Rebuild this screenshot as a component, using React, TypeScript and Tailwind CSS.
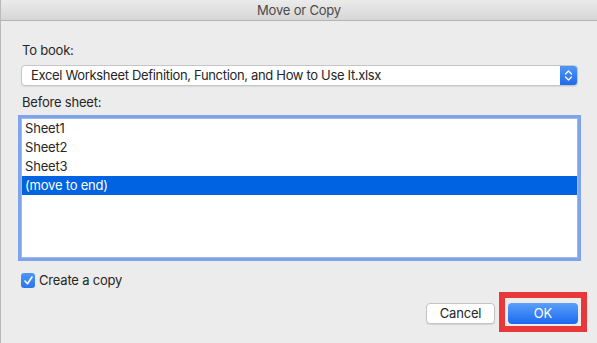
import React from "react";

export default function App() {
  const rows = ["Sheet1", "Sheet2", "Sheet3"];
  return (
    <div className="w-[597px] h-[343px] overflow-hidden bg-[#ececec] font-['Inter',sans-serif] text-[13px] tracking-[-0.2px] text-[#262626] relative border-l border-[#b9b9b9]">
      {/* Title bar */}
      <div className="h-[21px] border-b border-[#b3b3b3] bg-gradient-to-b from-[#ebebeb] to-[#d6d6d6] flex items-center justify-center text-[#4a4a4a] text-[13px] leading-none">
        Move or Copy
      </div>
      <div className="pl-[20px] pr-[19px] flex flex-col">
        <div className="mt-[21px] h-[16px] leading-[16px] pl-[1px]">To book:</div>
        <div className="mt-[7px] h-[21px] flex rounded-[4px] bg-white border border-[#c6c6c6] shadow-[0_1px_1px_rgba(0,0,0,0.08)] overflow-hidden">
          <div className="flex-1 pl-[9px] flex items-center leading-none whitespace-nowrap tracking-[-0.33px]">
            Excel Worksheet Definition, Function, and How to Use It.xlsx
          </div>
          <div className="w-[17px] bg-gradient-to-b from-[#5096f8] to-[#1f68ee] flex items-center justify-center">
            <svg width="9" height="13" viewBox="0 0 9 13" fill="none" stroke="white" strokeWidth="1.3" strokeLinecap="round" strokeLinejoin="round">
              <path d="M1.5 5 L4.5 2 L7.5 5" />
              <path d="M1.5 8 L4.5 11 L7.5 8" />
            </svg>
          </div>
        </div>
        <div className="mt-[8px] h-[16px] leading-[16px] pl-[1px]">Before sheet:</div>
        <div className="mt-[8px] h-[140px] bg-white border border-[#9db9ec] ring-[3px] ring-[#7fa4ea] flex flex-col">
          {rows.map((r) => (
            <div key={r} className="h-[19px] pl-[3px] flex items-center leading-none">
              {r}
            </div>
          ))}
          <div className="h-[19px] pl-[3px] flex items-center leading-none bg-[#0063e1] text-white">
            (move to end)
          </div>
        </div>
        <div className="mt-[14px] flex items-center gap-[4px] h-[16px]">
          <div className="w-[14px] h-[15px] rounded-[3px] bg-gradient-to-b from-[#4f95f7] to-[#2a75f0] flex items-center justify-center">
            <svg width="11" height="11" viewBox="0 0 11 11" fill="none" stroke="white" strokeWidth="1.6" strokeLinecap="round" strokeLinejoin="round">
              <path d="M2 6 L4.5 8.7 L9 2" />
            </svg>
          </div>
          <span className="leading-none">Create a copy</span>
        </div>
        <div className="mt-[15px] flex justify-end gap-[13px]">
          <div className="w-[69px] h-[21px] rounded-[4px] bg-white border border-[#c4c4c4] shadow-[0_1px_1px_rgba(0,0,0,0.1)] flex items-center justify-center leading-none text-[#262626]">
            Cancel
          </div>
          <div className="relative">
            <div className="w-[70px] h-[21px] rounded-[4px] bg-gradient-to-b from-[#5a9ffa] to-[#1b68ef] text-white flex items-center justify-center leading-none">
              OK
            </div>
            <div className="absolute -left-[9px] -right-[9px] -top-[11px] -bottom-[8px] border-[6px] border-[#e8383a]" />
          </div>
        </div>
      </div>
    </div>
  );
}
